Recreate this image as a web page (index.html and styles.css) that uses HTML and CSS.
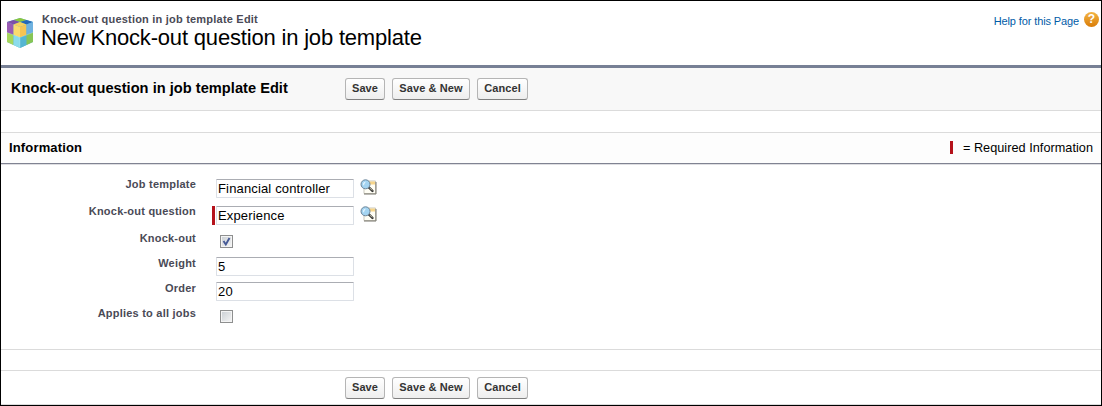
FILE: index.html
```html
<!DOCTYPE html>
<html lang="en">
<head>
    <meta charset="UTF-8">
    <title>New Knock-out question in job template</title>
    <link rel="stylesheet" href="styles.css">
</head>
<body>
    <!-- Shared lookup icon -->
    <svg class="sprite" width="0" height="0">
        <symbol id="lookup" viewBox="0 0 17 16">
            <path d="M4 2h11.500v12.500H4z" fill="#fffef5" stroke="#c9c7bd"/>
            <path d="M8 2.500h7v3H8z" fill="#f7d58a"/>
            <path d="M16 3v12H4" fill="none" stroke="#77756b"/>
            <path d="M9 8.500l3.500 3.500" stroke="#333" stroke-width="2.400" stroke-linecap="round"/>
            <path d="M9.500 8.700l2.700 2.700" stroke="#d5d0b5" stroke-width=".9"/>
            <circle cx="5.500" cy="5.300" r="4.500" fill="#a4d4f1" stroke="#6d8599" stroke-width="1"/>
            <path d="M3 5.500c0-2 1.500-3 3-2.800-1 1-2 2-2 4z" fill="#e6f6ff"/>
        </symbol>
    </svg>

    <div class="page">
        <div class="page-header">
            <svg class="logo" width="28" height="32" viewBox="0 0 28 32">
                <path d="M14 1L27 5v20L14 31 1 25V5z" fill="#58b5cf"/>
                <path d="M14 1l6.500 2L14 5 7.500 3z" fill="#8cc63c"/>
                <path d="M7.500 3L14 5 7.500 7.500 1 5z" fill="#7d4fa8"/>
                <path d="M20.500 3L27 5l-6.500 2.500L14 5z" fill="#2668b8"/>
                <path d="M14 5l6.500 2.500L14 10 7.500 7.500z" fill="#f8d05c"/>
                <path d="M1 5l6.500 2.500V18L1 15.500z" fill="#9a5bb4"/>
                <path d="M7.500 7.500L14 10v10.500L7.500 18z" fill="#fbdb6e"/>
                <path d="M14 10l6.500-2.500V18L14 20.500z" fill="#f6c452"/>
                <path d="M20.500 7.500L27 5v10.500L20.500 18z" fill="#6fb2e0"/>
                <path d="M1 15.500L7.500 18v10L1 25z" fill="#a6d65c"/>
                <path d="M7.500 18l6.500 2.500V31l-6.500-3z" fill="#8bdcec"/>
                <path d="M14 20.500l6.500-2.500v10L14 31z" fill="#55b6d2"/>
                <path d="M20.500 18l6.500-2.500V25l-6.500 3z" fill="#86c556"/>
                <path d="M14 20.500V31M1 15.500l13 5 13-5" fill="none" stroke="#fff" stroke-opacity=".3" stroke-width=".7"/>
            </svg>
            <div class="titles">
                <h1 class="page-type">Knock-out question in job template Edit</h1>
                <h2 class="page-title">New Knock-out question in job template</h2>
            </div>
            <a class="help" href="#">
                <span class="help-text">Help for this Page</span>
                <span class="help-icon">?</span>
            </a>
        </div>

        <div class="edit-header">
            <h2 class="edit-title">Knock-out question in job template Edit</h2>
            <div class="buttons">
                <button class="btn btn-save">Save</button>
                <button class="btn btn-new">Save &amp; New</button>
                <button class="btn btn-cancel">Cancel</button>
            </div>
        </div>

        <div class="section-header">
            <h3 class="section-title">Information</h3>
            <div class="legend">
                <span class="legend-mark"></span>
                <span class="legend-text">= Required Information</span>
            </div>
        </div>

        <form class="form">
            <div class="row row-tall">
                <label class="label" for="template">Job template</label>
                <div class="field">
                    <input class="input" type="text" id="template" value="Financial controller">
                    <svg class="lookup" width="17" height="16"><use href="#lookup"/></svg>
                </div>
            </div>
            <div class="row row-tall">
                <label class="label" for="question">Knock-out question</label>
                <div class="field required">
                    <input class="input" type="text" id="question" value="Experience">
                    <svg class="lookup" width="17" height="16"><use href="#lookup"/></svg>
                </div>
            </div>
            <div class="row">
                <label class="label" for="knockout">Knock-out</label>
                <div class="field">
                    <input class="check" type="checkbox" id="knockout" checked>
                    <svg class="tick" width="13" height="13"><path d="M3.500 6l2.300 3.500L9.500 3" fill="none" stroke="#465a96" stroke-width="1.900"/></svg>
                </div>
            </div>
            <div class="row">
                <label class="label" for="weight">Weight</label>
                <div class="field">
                    <input class="input" type="text" id="weight" value="5">
                </div>
            </div>
            <div class="row">
                <label class="label" for="order">Order</label>
                <div class="field">
                    <input class="input" type="text" id="order" value="20">
                </div>
            </div>
            <div class="row">
                <label class="label" for="all">Applies to all jobs</label>
                <div class="field">
                    <input class="check" type="checkbox" id="all">
                </div>
            </div>
        </form>

        <div class="bottom-bar">
            <div class="buttons">
                <button class="btn btn-save">Save</button>
                <button class="btn btn-new">Save &amp; New</button>
                <button class="btn btn-cancel">Cancel</button>
            </div>
        </div>
    </div>
</body>
</html>
```
FILE: styles.css
```css
* {
    box-sizing: border-box;
}

body {
    margin: 0;
    font-family: "Liberation Sans", Arial, sans-serif;
    font-size: 12px;
    color: #000;
    background-color: #fff;
}

h1, h2, h3 {
    margin: 0;
    white-space: nowrap;
}

.sprite {
    display: block;
}

.page {
    display: flex;
    flex-direction: column;
    height: 406px;
    border: 1px solid #000;
}

/* Page header */
.page-header {
    display: flex;
    height: 67px;
    border-bottom: 3px solid #778095;
}

.logo {
    margin: 16px 0 0 5px;
}

.titles {
    flex: 1;
    margin: 12px 0 0 8px;
}

.page-type {
    font-size: 11px;
    line-height: 13px;
    letter-spacing: 0.21px;
    color: #4a4a56;
}

.page-title {
    margin-left: -1px;
    font-size: 22px;
    line-height: 24px;
    font-weight: normal;
    letter-spacing: -0.18px;
}

.help {
    display: flex;
    margin: 11px 2px 0 0;
    text-decoration: none;
    color: #015ba7;
}

.help-text {
    font-size: 11px;
    line-height: 19px;
    letter-spacing: -0.12px;
}

.help-icon {
    width: 15px;
    height: 15px;
    margin-left: 5px;
    border-radius: 50%;
    background: linear-gradient(#f3b545, #d97c08);
    color: #fff;
    font-size: 12px;
    font-weight: bold;
    line-height: 15px;
    text-align: center;
}

/* Edit header */
.edit-header {
    display: flex;
    height: 43px;
    background-color: #f8f8f8;
    border-bottom: 1px solid #dbdbdb;
}

.edit-title {
    width: 344px;
    padding-left: 10px;
    font-size: 14.6px;
    line-height: 40px;
    letter-spacing: 0.03px;
}

.buttons {
    display: flex;
    gap: 7px;
    margin-top: 10px;
}

.btn {
    height: 22px;
    padding: 0 0 2px;
    border: 1px solid #b5b5b5;
    border-bottom-color: #7f7f7f;
    border-radius: 3px;
    background: linear-gradient(#fff, #eee);
    color: #333;
    font-family: inherit;
    font-size: 11px;
    font-weight: bold;
    letter-spacing: 0.1px;
    white-space: nowrap;
}

.btn-save {
    width: 40px;
}

.btn-new {
    width: 78px;
}

.btn-cancel {
    width: 51px;
}

/* Section header */
.section-header {
    display: flex;
    justify-content: space-between;
    height: 32px;
    margin-top: 21px;
    padding: 0 8px;
    background-color: #fdfdfd;
    border-top: 1px solid #dbdbdb;
    border-bottom: 1px solid #808392;
    box-shadow: 0 1px 0 #dedee2;
}

.section-title {
    font-size: 13px;
    line-height: 29px;
    letter-spacing: 0.15px;
}

.legend {
    display: flex;
    align-items: center;
    gap: 10px;
}

.legend-mark {
    width: 3px;
    height: 13px;
    margin-bottom: 1px;
    background-color: #b5121b;
}

.legend-text {
    font-size: 12.7px;
    line-height: 29px;
    letter-spacing: 0.03px;
}

/* Form */
.form {
    height: 185px;
    padding-top: 12px;
}

.row {
    display: flex;
    height: 25px;
}

.row-tall {
    height: 27px;
}

.label {
    width: 195px;
    font-size: 11px;
    font-weight: bold;
    line-height: 16px;
    letter-spacing: 0.22px;
    color: #4a4a56;
    text-align: right;
}

.field {
    display: flex;
    position: relative;
    margin: 2px 0 0 20px;
}

.row-tall .field {
    margin-top: 3px;
}

.required::before {
    content: "";
    position: absolute;
    left: -4px;
    top: 0;
    width: 3px;
    height: 19px;
    background-color: #b5121b;
}

.input {
    width: 138px;
    height: 19px;
    padding: 0 1px;
    border: 1px solid #dce0e6;
    border-top-color: #abadb3;
    border-radius: 1px;
    font-family: inherit;
    font-size: 13px;
    letter-spacing: 0.15px;
    color: #000;
}

.lookup {
    margin-left: 6px;
}

.check {
    appearance: none;
    width: 13px;
    height: 13px;
    margin: 3px 0 0 4px;
    border: 1px solid #8e8f8f;
    background: linear-gradient(135deg, #c9ced3, #f6f6f6);
    box-shadow: inset 0 0 0 1px #f4f4f4;
}

/* Check mark lies over its box */
.tick {
    position: absolute;
    left: 4px;
    top: 3px;
}

/* Bottom buttons */
.bottom-bar {
    flex: 1;
    border-top: 1px solid #dbdbdb;
    border-bottom: 1px solid #dbdbdb;
}

.bottom-bar .buttons {
    margin-top: 20px;
    padding: 6px 0 0 344px;
    border-top: 1px solid #dbdbdb;
}
```
